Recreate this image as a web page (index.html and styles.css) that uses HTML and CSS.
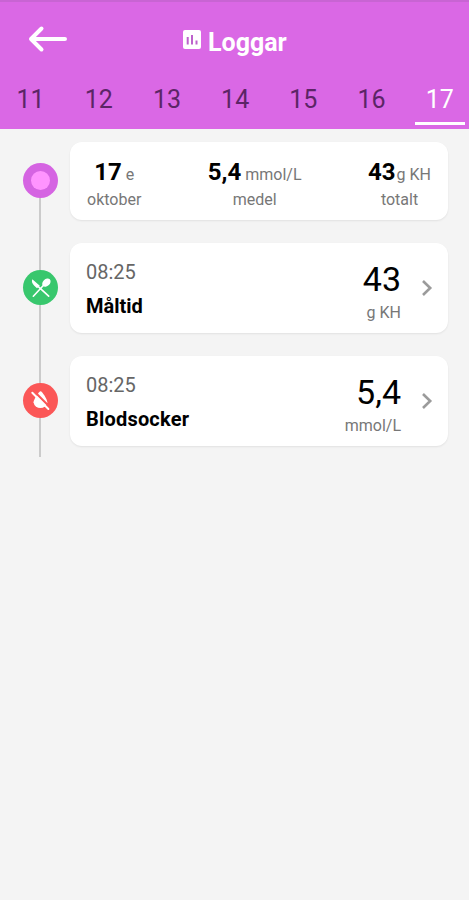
FILE: index.html
```html
<!DOCTYPE html>
<html lang="sv">

<head>
    <meta charset="utf-8">
    <title>Loggar</title>
    <link rel="stylesheet" href="styles.css">
</head>

<body>
    <header class="header">
        <div class="topbar">
            <svg class="back" width="40" height="28" viewBox="0 0 40 28">
                <path d="M14.5 3.5 L4 14 L14.5 24.5 M4 14 H38" />
            </svg>
            <h1 class="title">
                <svg class="chart" width="18" height="19" viewBox="0 0 18 19">
                    <rect width="18" height="19" rx="2" fill="#fff" />
                    <path d="M4.7 7 V14.5 M9 5 V14.5 M13.5 10.5 V14.5" />
                </svg>
                <span>Loggar</span>
            </h1>
        </div>
        <nav class="days">
            <div class="day">11</div>
            <div class="day">12</div>
            <div class="day">13</div>
            <div class="day">14</div>
            <div class="day">15</div>
            <div class="day">16</div>
            <div class="day active">17</div>
        </nav>
    </header>

    <main class="timeline">
        <div class="row first">
            <div class="marker">
                <svg width="36" height="36" viewBox="0 0 36 36">
                    <circle cx="18.5" cy="17.5" r="17.5" fill="#d564e2" />
                    <circle cx="18.5" cy="17.5" r="9.5" fill="#ff94ff" />
                </svg>
            </div>
            <div class="card summary">
                <div class="stat date">
                    <div class="figure"><b>17</b><span>e</span></div>
                    <div class="label">oktober</div>
                </div>
                <div class="stat mean">
                    <div class="figure"><b>5,4</b><span>mmol/L</span></div>
                    <div class="label">medel</div>
                </div>
                <div class="stat total">
                    <div class="figure"><b>43</b><span>g KH</span></div>
                    <div class="label">totalt</div>
                </div>
            </div>
        </div>

        <div class="row">
            <div class="marker">
                <!-- knife and spoon -->
                <svg width="36" height="36" viewBox="0 0 36 36">
                    <circle cx="18.5" cy="17.5" r="17.5" fill="#38c76d" />
                    <path d="M10.3 9.3 C9.2 11.8 10.5 14 12.3 15.7 L15 18.3 L17.8 15.8 Z" fill="#fff" />
                    <path d="M15.5 15.8 L26.7 26.2 M21.8 15 L11.3 26.2" stroke="#fff" stroke-width="1.6" stroke-linecap="round" />
                    <ellipse cx="24.4" cy="12.6" rx="3.5" ry="4.8" transform="rotate(45 24.4 12.6)" fill="#fff" />
                </svg>
            </div>
            <div class="card entry">
                <div class="what">
                    <div class="time">08:25</div>
                    <div class="name">Måltid</div>
                </div>
                <div class="amount">
                    <div class="value">43</div>
                    <div class="unit">g KH</div>
                </div>
                <svg class="chevron" width="12" height="18" viewBox="0 0 12 18">
                    <path d="M2 2 L9.2 9 L2 16" />
                </svg>
            </div>
        </div>

        <div class="row">
            <div class="marker">
                <!-- crossed out drop -->
                <svg width="36" height="36" viewBox="0 0 36 36">
                    <circle cx="18.5" cy="17.5" r="17.5" fill="#fb5757" />
                    <path d="M18.6 8.2 C20 8.2 25.3 16 25.3 19.3 A7 7 0 0 1 11.5 19.3 C11.5 16.5 17.2 8.2 18.6 8.2 Z" fill="#fff" />
                    <path d="M11.8 8 L28.3 24.5" stroke="#fb5757" stroke-width="2.2" />
                    <path d="M10.3 9.8 L26.4 26" stroke="#fff" stroke-width="2" stroke-linecap="round" />
                </svg>
            </div>
            <div class="card entry">
                <div class="what">
                    <div class="time">08:25</div>
                    <div class="name wide">Blodsocker</div>
                </div>
                <div class="amount">
                    <div class="value">5,4</div>
                    <div class="unit">mmol/L</div>
                </div>
                <svg class="chevron" width="12" height="18" viewBox="0 0 12 18">
                    <path d="M2 2 L9.2 9 L2 16" />
                </svg>
            </div>
        </div>
    </main>
</body>

</html>
```
FILE: styles.css
```css
* {
    box-sizing: border-box;
}

body {
    margin: 0;
    background-color: #f4f4f4;
    font-family: Roboto, sans-serif;
    overflow-x: hidden;
}

svg {
    display: block;
    fill: none;
}

.header {
    height: 129px;
    background-color: #da68e5;
    border-top: 2px solid #c864d3;
    overflow: hidden;
}

/* title bar */
.topbar {
    display: grid;
    grid-template-columns: 156px 1fr;
    height: 74px;
    padding: 23px 0 0 27px;
}

.back path {
    stroke: #fff;
    stroke-width: 4;
    stroke-linecap: round;
    stroke-linejoin: round;
}

.title {
    display: flex;
    gap: 7px;
    margin: 0;
    color: #fff;
    font-size: 25px;
    line-height: 36px;
    font-weight: bold;
}

.chart {
    margin-top: 5px;
}

.chart path {
    stroke: #bd62cc;
    stroke-width: 2;
}

.days {
    display: grid;
    grid-template-columns: repeat(7, 68.2px);
    margin-left: -3.5px;
}

.day {
    height: 49px;
    width: 50px;
    margin: 0 auto;
    color: #5c2566;
    font-size: 25px;
    line-height: 48px;
    text-align: center;
}

.active {
    color: #fff;
    border-bottom: 3px solid #fff;
}

/* log rows */
.timeline {
    display: flex;
    flex-direction: column;
    gap: 23px;
    width: 469px;
    height: 328px;
    padding: 13px 21px 0 22px;
    background: linear-gradient(#cbcbcb, #cbcbcb) 39px 50px / 2px 278px no-repeat;
}

.row {
    display: grid;
    grid-template-columns: 48px 1fr;
    align-items: center;
    height: 90px;
}

.first {
    height: 78px;
}

.card {
    display: flex;
    height: 100%;
    background-color: #fff;
    border-radius: 12px;
    box-shadow: 0 1px 2px rgba(0, 0, 0, 0.08);
}

.summary {
    justify-content: space-between;
    padding: 16px 17px 0 17px;
    text-align: center;
}

.figure {
    display: flex;
    justify-content: center;
    align-items: baseline;
    gap: 4px;
    height: 28px;
    line-height: 28px;
}

.figure b {
    color: #000;
    font-size: 24px;
}

.figure span,
.label,
.unit {
    color: #777;
    font-size: 16px;
}

.total .figure {
    gap: 1px;
}

.label {
    line-height: 28px;
}

.entry {
    padding: 0 15px 0 16px;
}

.what {
    flex: 1;
    padding-top: 12px;
    font-size: 20px;
    line-height: 34px;
}

.time {
    color: #666;
}

.name {
    color: #000;
    font-weight: bold;
}

.wide {
    letter-spacing: 0.2px;
}

.amount {
    padding-top: 16px;
    text-align: right;
}

.value {
    color: #000;
    font-size: 34px;
    line-height: 40px;
}

.unit {
    line-height: 28px;
}

.chevron {
    align-self: center;
    margin-left: 20px;
}

.chevron path {
    stroke: #9b9b9b;
    stroke-width: 2.6;
}
```
